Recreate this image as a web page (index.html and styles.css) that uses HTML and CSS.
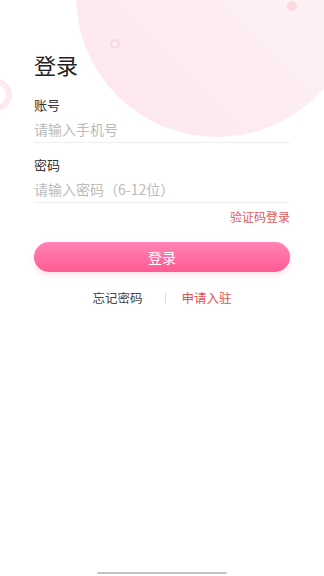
FILE: index.html
```html
<!DOCTYPE html>
<html lang="zh-CN">
<head>
    <meta charset="UTF-8">
    <meta name="viewport" content="width=device-width, initial-scale=1.0">
    <title>登录</title>
    <link rel="stylesheet" href="styles.css">
</head>
<body>
    <div class="decor">
        <div class="bg-circle"></div>
        <div class="bg-ring"></div>
        <div class="bg-dot"></div>
        <div class="bg-side-ring"></div>
    </div>

    <div class="page">
        <h1 class="title">登录</h1>

        <div class="field">
            <label for="phone">账号</label>
            <input type="text" id="phone" placeholder="请输入手机号">
        </div>

        <div class="field">
            <label for="password">密码</label>
            <input type="password" id="password" placeholder="请输入密码（6-12位）">
        </div>

        <div class="code-login">
            <a href="#">验证码登录</a>
        </div>

        <button class="login-btn">登录</button>

        <div class="links">
            <a href="#" class="forget">忘记密码</a>
            <span class="sep"></span>
            <a href="#" class="apply">申请入驻</a>
        </div>
    </div>

    <div class="home-bar"></div>
</body>
</html>
```

FILE: styles.css
```css
* {
    box-sizing: border-box;
}

html {
    overflow: hidden;
}

body {
    margin: 0;
    height: 576px;
    display: flex;
    flex-direction: column;
    font-family: "Noto Sans CJK SC", "Noto Sans", sans-serif;
    background: #ffffff;
    color: #333333;
    position: relative;
    overflow: hidden;
}

/* background decoration */
.decor {
    position: absolute;
    top: 0;
    left: 0;
    width: 100%;
    height: 100%;
    overflow: hidden;
}

.bg-circle {
    position: absolute;
    left: 76px;
    top: -145px;
    width: 282px;
    height: 282px;
    border-radius: 50%;
    background: linear-gradient(225deg, #fff6f8 0%, #fdeef2 50%, #fce6eb 100%);
}

.bg-ring {
    position: absolute;
    left: 110px;
    top: 39px;
    width: 10px;
    height: 10px;
    border-radius: 50%;
    border: 2px solid #f5dbe1;
}

.bg-dot {
    position: absolute;
    left: 287px;
    top: 1px;
    width: 10px;
    height: 10px;
    border-radius: 50%;
    background: #fcd9e1;
}

.bg-side-ring {
    position: absolute;
    left: -20px;
    top: 79px;
    width: 32px;
    height: 32px;
    border-radius: 50%;
    border: 6px solid #fde9ee;
}

.page {
    position: relative;
    padding: 49px 34px 0;
}

.title {
    margin: 0;
    font-size: 22px;
    line-height: 30px;
    font-weight: normal;
    color: #222222;
}

.field {
    display: flex;
    flex-direction: column;
    border-bottom: 1px solid #eeeeee;
    padding-bottom: 3px;
}

.field:first-of-type {
    margin-top: 17px;
}

.field + .field {
    margin-top: 13px;
}

.field label {
    font-size: 13px;
    line-height: 18px;
    color: #333333;
}

.field input {
    margin-top: 5px;
    border: none;
    outline: none;
    padding: 0;
    font-family: inherit;
    font-size: 14px;
    line-height: 20px;
    height: 20px;
    color: #333333;
    background: transparent;
}

.field input::placeholder {
    color: #bbbbbb;
}

.code-login {
    margin-top: 6px;
    text-align: right;
    font-size: 12px;
    line-height: 16px;
}

.code-login a {
    color: #e25b5b;
    text-decoration: none;
}

.login-btn {
    display: block;
    width: 100%;
    height: 30px;
    margin-top: 17px;
    border: none;
    border-radius: 15px;
    background: linear-gradient(180deg, #ff84b5 0%, #ff5a93 100%);
    box-shadow: 0 3px 6px rgba(255, 90, 147, 0.18);
    color: #ffffff;
    font-family: inherit;
    font-size: 14px;
    line-height: 30px;
    padding: 0;
    cursor: pointer;
}

.links {
    margin-top: 17px;
    display: flex;
    justify-content: center;
    align-items: center;
    font-size: 12.5px;
    line-height: 18px;
}

.links a {
    text-decoration: none;
}

.forget {
    color: #444444;
}

.apply {
    color: #e8504f;
}

.sep {
    width: 1px;
    height: 10px;
    background: #dddddd;
    margin: 0 16px 0 22px;
}

.home-bar {
    margin: auto auto 2px;
    width: 130px;
    height: 2px;
    border-radius: 1px;
    background: #c4c4c4;
}
```
